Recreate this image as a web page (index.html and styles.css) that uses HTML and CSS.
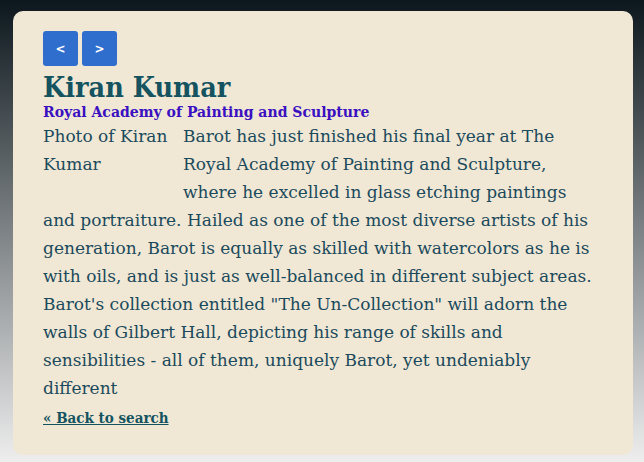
FILE: index.html
```html
<!DOCTYPE html>
<html>
<head>
<meta charset="utf-8">
<link rel="stylesheet" href="styles.css">
</head>
<body>
<main class="card">
  <nav class="pager">
    <button class="btn">&lt;</button>
    <button class="btn">&gt;</button>
  </nav>
  <h1 class="name">Kiran Kumar</h1>
  <h2 class="school">Royal Academy of Painting and Sculpture</h2>
  <div class="bio">
    <div class="photo">Photo of Kiran Kumar</div>
    <p class="text">Barot has just finished his final year at The Royal Academy of Painting and Sculpture, where he excelled in glass etching paintings and portraiture. Hailed as one of the most diverse artists of his generation, Barot is equally as skilled with watercolors as he is with oils, and is just as well-balanced in different subject areas. Barot's collection entitled "The Un-Collection" will adorn the walls of Gilbert Hall, depicting his range of skills and sensibilities - all of them, uniquely Barot, yet undeniably different</p>
  </div>
  <a class="back" href="#">« Back to search</a>
</main>
</body>
</html>
```
FILE: styles.css
```css
html, body {
  margin: 0;
  height: 100%;
}
body {
  background: linear-gradient(to bottom, #0c171d 0%, #eeeeee 100%);
  padding: 11px 11px 7px 13px;
  box-sizing: border-box;
}
.card {
  background: #f0e8d5;
  border-radius: 10px;
  padding: 20px 30px 24px 30px;
  height: 100%;
  box-sizing: border-box;
}
.pager {
  display: flex;
  gap: 4px;
}
.btn {
  width: 35px;
  height: 35px;
  border: none;
  border-radius: 3px;
  background: #2f6ecc;
  color: #ffffff;
  font-family: "DejaVu Sans", sans-serif;
  font-weight: bold;
  font-size: 12px;
  padding: 0;
}
.name {
  margin: 6px 0 0 0;
  font-family: "DejaVu Serif Condensed", "DejaVu Serif", serif;
  font-weight: bold;
  font-size: 28.5px;
  line-height: 30px;
  color: #14535f;
}
.school {
  margin: 0;
  font-family: "DejaVu Serif Condensed", "DejaVu Serif", serif;
  font-weight: bold;
  font-size: 15.6px;
  line-height: 20px;
  color: #3a10c0;
}
.bio {
  font-family: "DejaVu Serif", serif;
  font-size: 17px;
  line-height: 28px;
  color: #1b4a5c;
}
.photo {
  float: left;
  width: 130px;
  height: 84px;
  margin-right: 10px;
}
.text {
  margin: 0;
}
.back {
  display: inline-block;
  margin-top: 7px;
  font-family: "DejaVu Serif Condensed", "DejaVu Serif", serif;
  font-weight: bold;
  font-size: 15px;
  color: #14535f;
}
```
